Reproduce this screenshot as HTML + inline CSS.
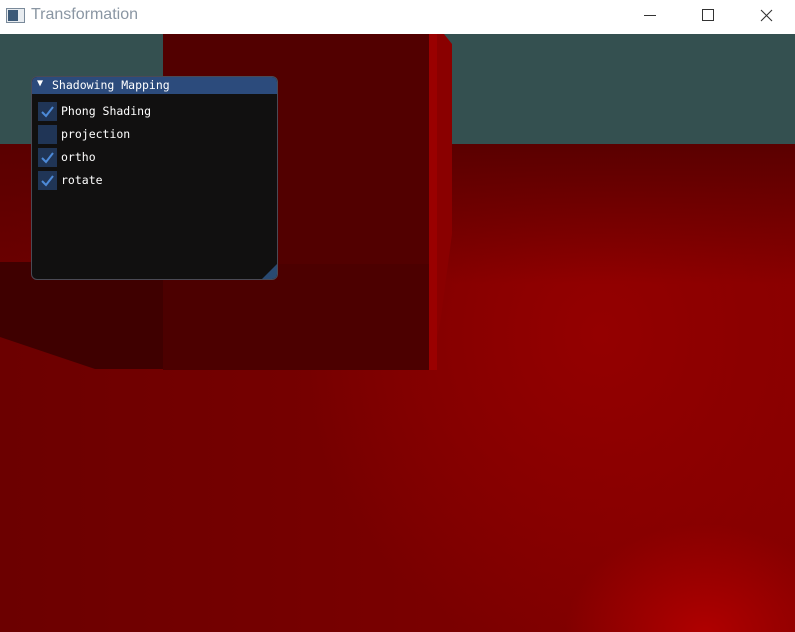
<!DOCTYPE html>
<html><head><style>
body{margin:0;width:795px;height:632px;overflow:hidden;position:relative;background:#fff;font-family:"Liberation Sans",sans-serif}
.tb{position:absolute;left:0;top:0;width:795px;height:34px;background:#fff}
.scene{position:absolute;left:0;top:34px;width:795px;height:598px;overflow:hidden;
background:radial-gradient(ellipse 140px 110px at 705px 600px,#b00000,rgba(170,0,0,0) 100%),
radial-gradient(ellipse 300px 330px at 600px 300px,#940000,rgba(150,0,0,0) 100%),
linear-gradient(90deg,#6c0000 0%,#760000 40%,#7e0000 70%,#860000 100%)}
.sky{position:absolute;left:0;top:0;width:795px;height:110px;background:#345050}
.fade{position:absolute;left:0;top:110px;width:795px;height:140px;background:linear-gradient(#5a0000,rgba(90,0,0,0))}
.mono{font-family:"DejaVu Sans Mono","Liberation Mono",monospace;font-size:11.5px;color:#fff;white-space:nowrap}
</style></head><body>
<div class="tb">
<svg style="position:absolute;left:6px;top:8px" width="20" height="16"><rect x="0.5" y="0.5" width="18" height="14" fill="#e8ecf0" stroke="#7a8a9a"/><rect x="2" y="2" width="10" height="11" fill="#3d5a78"/></svg>
<div style="position:absolute;left:31px;top:6px;font-size:16px;color:#8a96a3">Transformation</div>
<div style="position:absolute;left:644px;top:15px;width:12px;height:1px;background:#333"></div>
<div style="position:absolute;left:702px;top:9px;width:10px;height:10px;border:1px solid #333"></div>
<svg style="position:absolute;left:760px;top:9px" width="13" height="13"><path d="M1 1L12 12M12 1L1 12" stroke="#333" stroke-width="1.1"/></svg>
</div>
<div class="scene">
<div class="sky"></div>
<div class="fade"></div>
<svg style="position:absolute;left:0;top:0" width="795" height="598">
<polygon points="0,228 163,228 163,335 95,335 0,303" fill="#3f0000"/>
<polygon points="429,0 444,0 452,10 452,200 440,290 429,336" fill="#8a0000"/>
<polygon points="429,0 437,0 437,336 429,336" fill="#9a0000"/>
<rect x="163" y="0" width="266" height="336" fill="#520000"/>
<rect x="163" y="230" width="266" height="106" fill="#4c0000"/>
</svg>
<div style="position:absolute;left:31px;top:42px;width:245px;height:202px;border:1px solid #4a4a55;border-radius:6px;background:#111010;overflow:hidden">
<div style="height:17px;background:#2c4b7c" class="mono"><span style="position:absolute;left:5px;top:1px;font-size:10px">▼</span><span style="position:absolute;left:20px;top:1px">Shadowing Mapping</span></div>
<div style="position:absolute;right:0;bottom:0;width:0;height:0;border-left:15px solid transparent;border-bottom:15px solid #294a72"></div>
</div>
<div class="mono" style="position:absolute;left:38px;top:68px">
<div style="height:23px;position:relative"><div style="position:absolute;left:0;top:0;width:19px;height:19px;background:#203556"></div><svg style="position:absolute;left:2px;top:3px" width="15" height="13"><path d="M2 7L6 11L13 2" stroke="#4d8ad8" stroke-width="2" fill="none"/></svg><span style="position:absolute;left:23px;top:2px">Phong Shading</span></div>
<div style="height:23px;position:relative"><div style="position:absolute;left:0;top:0;width:19px;height:19px;background:#203556"></div><span style="position:absolute;left:23px;top:2px">projection</span></div>
<div style="height:23px;position:relative"><div style="position:absolute;left:0;top:0;width:19px;height:19px;background:#203556"></div><svg style="position:absolute;left:2px;top:3px" width="15" height="13"><path d="M2 7L6 11L13 2" stroke="#4d8ad8" stroke-width="2" fill="none"/></svg><span style="position:absolute;left:23px;top:2px">ortho</span></div>
<div style="height:23px;position:relative"><div style="position:absolute;left:0;top:0;width:19px;height:19px;background:#203556"></div><svg style="position:absolute;left:2px;top:3px" width="15" height="13"><path d="M2 7L6 11L13 2" stroke="#4d8ad8" stroke-width="2" fill="none"/></svg><span style="position:absolute;left:23px;top:2px">rotate</span></div>
</div>
</div>
</body></html>
